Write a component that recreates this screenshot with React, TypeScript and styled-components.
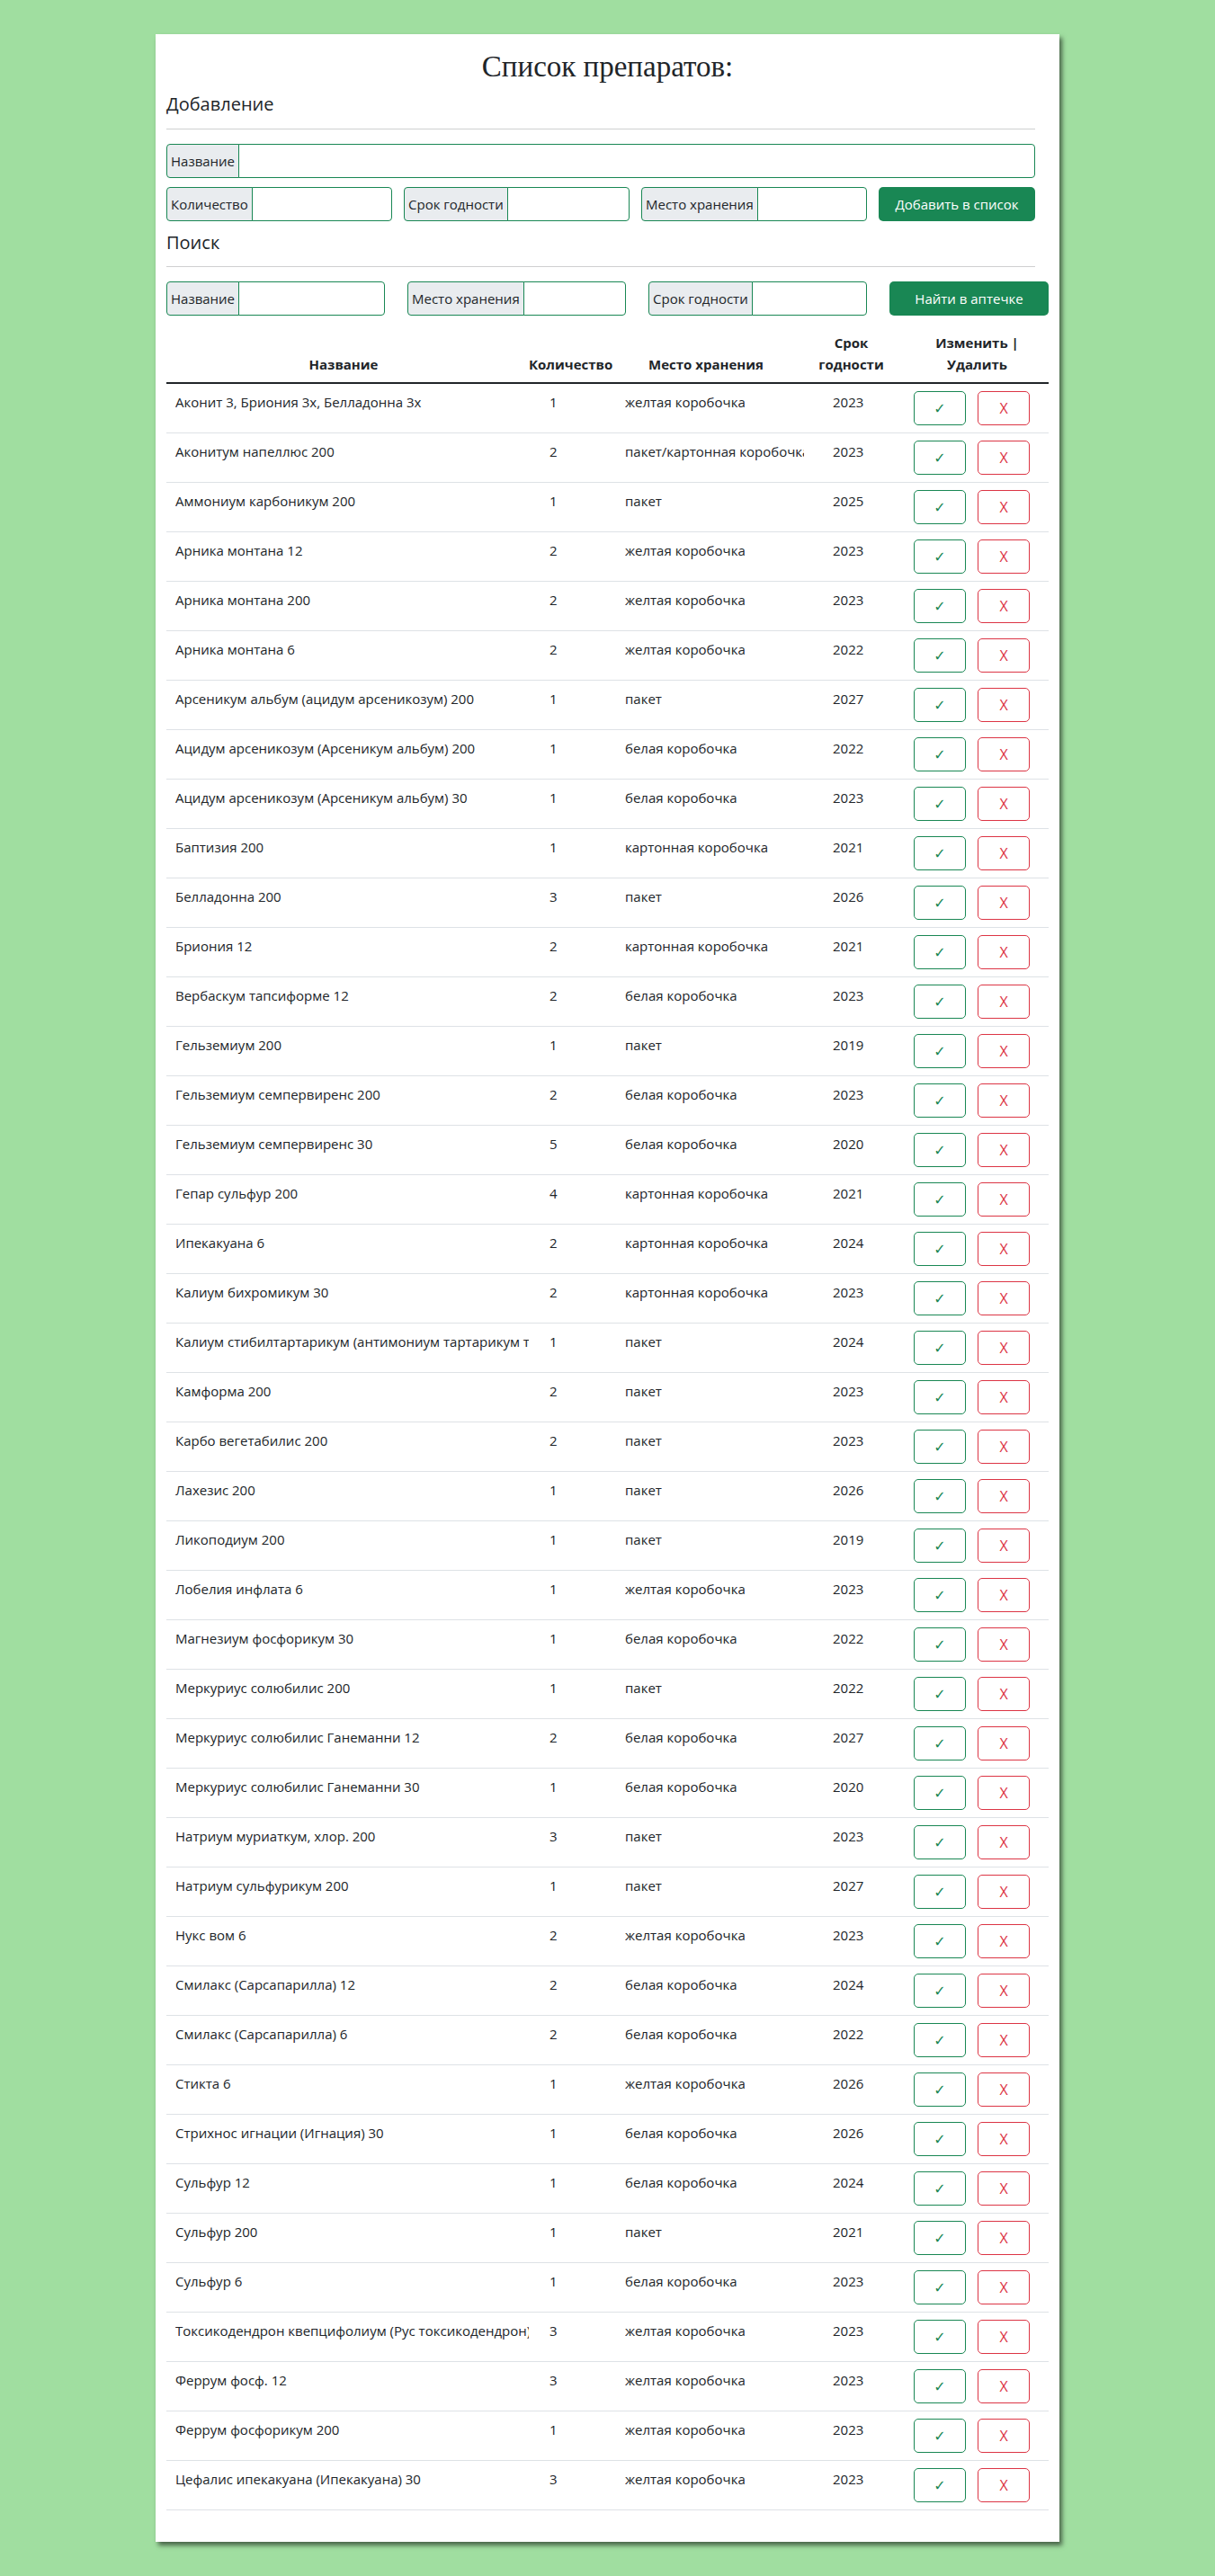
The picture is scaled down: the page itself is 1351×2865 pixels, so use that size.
import React from "react";
import styled, { createGlobalStyle } from "styled-components";

const GlobalStyle = createGlobalStyle`
  html, body {
    margin: 0;
    padding: 0;
  }
  body {
    background: #a0dea0;
    font-family: "Open Sans", "Noto Sans", "DejaVu Sans", sans-serif;
    font-size: 15px;
    color: #212529;
  }
  * { box-sizing: border-box; }
`;

const Page = styled.div`
  padding: 38px 0 38px;
`;

const Card = styled.main`
  width: 1005px;
  margin: 0 auto;
  background: #ffffff;
  box-shadow: 3px 4px 5px rgba(0, 0, 0, 0.55);
  padding: 17px 12px 35px 12px;
`;

const Title = styled.h1`
  margin: 0;
  font-family: "Liberation Serif", "DejaVu Serif", serif;
  font-weight: 400;
  font-size: 33px;
  line-height: 38px;
  text-align: center;
  color: #212529;
`;

const FormArea = styled.section`
  padding-right: 15px;
`;

const SectionTitle = styled.h5<{ $top: number }>`
  margin: ${(p) => p.$top}px 0 0;
  font-size: 20px;
  font-weight: 400;
  line-height: 24px;
  color: #212529;
`;

const Rule = styled.hr<{ $top: number }>`
  margin: ${(p) => p.$top}px 0 0;
  border: 0;
  border-top: 1px solid #cfd0d1;
  height: 0;
`;

const FieldRow = styled.div<{ $cols: string; $gap: number; $top: number }>`
  display: grid;
  grid-template-columns: ${(p) => p.$cols};
  column-gap: ${(p) => p.$gap}px;
  margin-top: ${(p) => p.$top}px;
`;

const InputGroup = styled.label`
  display: flex;
  height: 38px;
  min-width: 0;
`;

const Addon = styled.span`
  display: flex;
  align-items: center;
  padding: 0 4px;
  background: #e9ecef;
  border: 1px solid #198754;
  border-radius: 4px 0 0 4px;
  white-space: nowrap;
  font-size: 15px;
  color: #212529;
`;

const TextInput = styled.input`
  flex: 1;
  min-width: 0;
  margin-left: -1px;
  border: 1px solid #198754;
  border-radius: 0 4px 4px 0;
  background: #fff;
  font: inherit;
  padding: 0 8px;
  outline: none;
`;

const SolidButton = styled.button`
  height: 38px;
  border: 0;
  border-radius: 5px;
  background: #198754;
  color: #ffffff;
  font-family: inherit;
  font-size: 15px;
  cursor: pointer;
`;

const Table = styled.table`
  width: 100%;
  margin-top: 10px;
  border-collapse: collapse;
  table-layout: fixed;
`;

const HeadCell = styled.th<{ $padR: number }>`
  padding: 8px ${(p) => p.$padR}px 8px 0;
  text-align: center;
  vertical-align: bottom;
  font-weight: 700;
  font-size: 15px;
  line-height: 24px;
  border-bottom: 2px solid #212529;
`;

const Cell = styled.td<{ $padL: number }>`
  padding: 8px 0 8px ${(p) => p.$padL}px;
  vertical-align: top;
  font-size: 15px;
  line-height: 24px;
  border-bottom: 1px solid #dee2e6;
`;

const Clip = styled.div`
  overflow: hidden;
  white-space: nowrap;
`;

const Actions = styled.div`
  display: flex;
  gap: 13px;
`;

const OutlineButton = styled.button<{ $tone: "ok" | "del" }>`
  width: 58px;
  height: 38px;
  border: 1px solid ${(p) => (p.$tone === "ok" ? "#198754" : "#dc3545")};
  color: ${(p) => (p.$tone === "ok" ? "#198754" : "#dc3545")};
  background: #ffffff;
  border-radius: 5px;
  font-family: "Open Sans", "DejaVu Sans", sans-serif;
  font-size: 16px;
  padding: 0;
  cursor: pointer;
`;

type Row = [string, number, string, number];

const rows: Row[] = [
  ["Аконит 3, Бриония 3х, Белладонна 3х", 1, "желтая коробочка", 2023],
  ["Аконитум напеллюс 200", 2, "пакет/картонная коробочка", 2023],
  ["Аммониум карбоникум 200", 1, "пакет", 2025],
  ["Арника монтана 12", 2, "желтая коробочка", 2023],
  ["Арника монтана 200", 2, "желтая коробочка", 2023],
  ["Арника монтана 6", 2, "желтая коробочка", 2022],
  ["Арсеникум альбум (ацидум арсеникозум) 200", 1, "пакет", 2027],
  ["Ацидум арсеникозум (Арсеникум альбум) 200", 1, "белая коробочка", 2022],
  ["Ацидум арсеникозум (Арсеникум альбум) 30", 1, "белая коробочка", 2023],
  ["Баптизия 200", 1, "картонная коробочка", 2021],
  ["Белладонна 200", 3, "пакет", 2026],
  ["Бриония 12", 2, "картонная коробочка", 2021],
  ["Вербаскум тапсиформе 12", 2, "белая коробочка", 2023],
  ["Гельземиум 200", 1, "пакет", 2019],
  ["Гельземиум семпервиренс 200", 2, "белая коробочка", 2023],
  ["Гельземиум семпервиренс 30", 5, "белая коробочка", 2020],
  ["Гепар сульфур 200", 4, "картонная коробочка", 2021],
  ["Ипекакуана 6", 2, "картонная коробочка", 2024],
  ["Калиум бихромикум 30", 2, "картонная коробочка", 2023],
  ["Калиум стибилтартарикум (антимониум тартарикум тартаратус) 6", 1, "пакет", 2024],
  ["Камформа 200", 2, "пакет", 2023],
  ["Карбо вегетабилис 200", 2, "пакет", 2023],
  ["Лахезис 200", 1, "пакет", 2026],
  ["Ликоподиум 200", 1, "пакет", 2019],
  ["Лобелия инфлата 6", 1, "желтая коробочка", 2023],
  ["Магнезиум фосфорикум 30", 1, "белая коробочка", 2022],
  ["Меркуриус солюбилис 200", 1, "пакет", 2022],
  ["Меркуриус солюбилис Ганеманни 12", 2, "белая коробочка", 2027],
  ["Меркуриус солюбилис Ганеманни 30", 1, "белая коробочка", 2020],
  ["Натриум муриаткум, хлор. 200", 3, "пакет", 2023],
  ["Натриум сульфурикум 200", 1, "пакет", 2027],
  ["Нукс вом 6", 2, "желтая коробочка", 2023],
  ["Смилакс (Сарсапарилла) 12", 2, "белая коробочка", 2024],
  ["Смилакс (Сарсапарилла) 6", 2, "белая коробочка", 2022],
  ["Стикта 6", 1, "желтая коробочка", 2026],
  ["Стрихнос игнации (Игнация) 30", 1, "белая коробочка", 2026],
  ["Сульфур 12", 1, "белая коробочка", 2024],
  ["Сульфур 200", 1, "пакет", 2021],
  ["Сульфур 6", 1, "белая коробочка", 2023],
  ["Токсикодендрон квепцифолиум (Рус токсикодендрон)", 3, "желтая коробочка", 2023],
  ["Феррум фосф. 12", 3, "желтая коробочка", 2023],
  ["Феррум фосфорикум 200", 1, "желтая коробочка", 2023],
  ["Цефалис ипекакуана (Ипекакуана) 30", 3, "желтая коробочка", 2023],
];

const Field: React.FC<{ label: string }> = ({ label }) => (
  <InputGroup>
    <Addon>{label}</Addon>
    <TextInput type="text" />
  </InputGroup>
);

export default function App() {
  return (
    <>
      <GlobalStyle />
      <Page>
        <Card>
          <Title>Список препаратов:</Title>
          <FormArea>
            <SectionTitle $top={11}>Добавление</SectionTitle>
            <Rule $top={15} />
            <FieldRow $cols="1fr" $gap={0} $top={16}>
              <Field label="Название" />
            </FieldRow>
            <FieldRow $cols="1fr 1fr 1fr 174px" $gap={13} $top={10}>
              <Field label="Количество" />
              <Field label="Срок годности" />
              <Field label="Место хранения" />
              <SolidButton>Добавить в список</SolidButton>
            </FieldRow>
            <SectionTitle $top={12}>Поиск</SectionTitle>
            <Rule $top={14} />
          </FormArea>
          <FieldRow $cols="1fr 1fr 1fr 177px" $gap={25} $top={16}>
            <Field label="Название" />
            <Field label="Место хранения" />
            <Field label="Срок годности" />
            <SolidButton>Найти в аптечке</SolidButton>
          </FieldRow>
          <Table>
            <colgroup>
              <col style={{ width: 403 }} />
              <col style={{ width: 98 }} />
              <col style={{ width: 208 }} />
              <col style={{ width: 115 }} />
              <col style={{ width: 157 }} />
            </colgroup>
            <thead>
              <tr>
                <HeadCell $padR={9}>Название</HeadCell>
                <HeadCell $padR={12}>Количество</HeadCell>
                <HeadCell $padR={10}>Место хранения</HeadCell>
                <HeadCell $padR={10}>
                  Срок
                  <br />
                  годности
                </HeadCell>
                <HeadCell $padR={2}>
                  Изменить |
                  <br />
                  Удалить
                </HeadCell>
              </tr>
            </thead>
            <tbody>
              {rows.map(([name, qty, place, year]) => (
                <tr key={name}>
                  <Cell $padL={10}>
                    <Clip>{name}</Clip>
                  </Cell>
                  <Cell $padL={23}>{qty}</Cell>
                  <Cell $padL={9}>
                    <Clip>{place}</Clip>
                  </Cell>
                  <Cell $padL={32}>{year}</Cell>
                  <Cell $padL={7}>
                    <Actions>
                      <OutlineButton $tone="ok">✓</OutlineButton>
                      <OutlineButton $tone="del">X</OutlineButton>
                    </Actions>
                  </Cell>
                </tr>
              ))}
            </tbody>
          </Table>
        </Card>
      </Page>
    </>
  );
}
